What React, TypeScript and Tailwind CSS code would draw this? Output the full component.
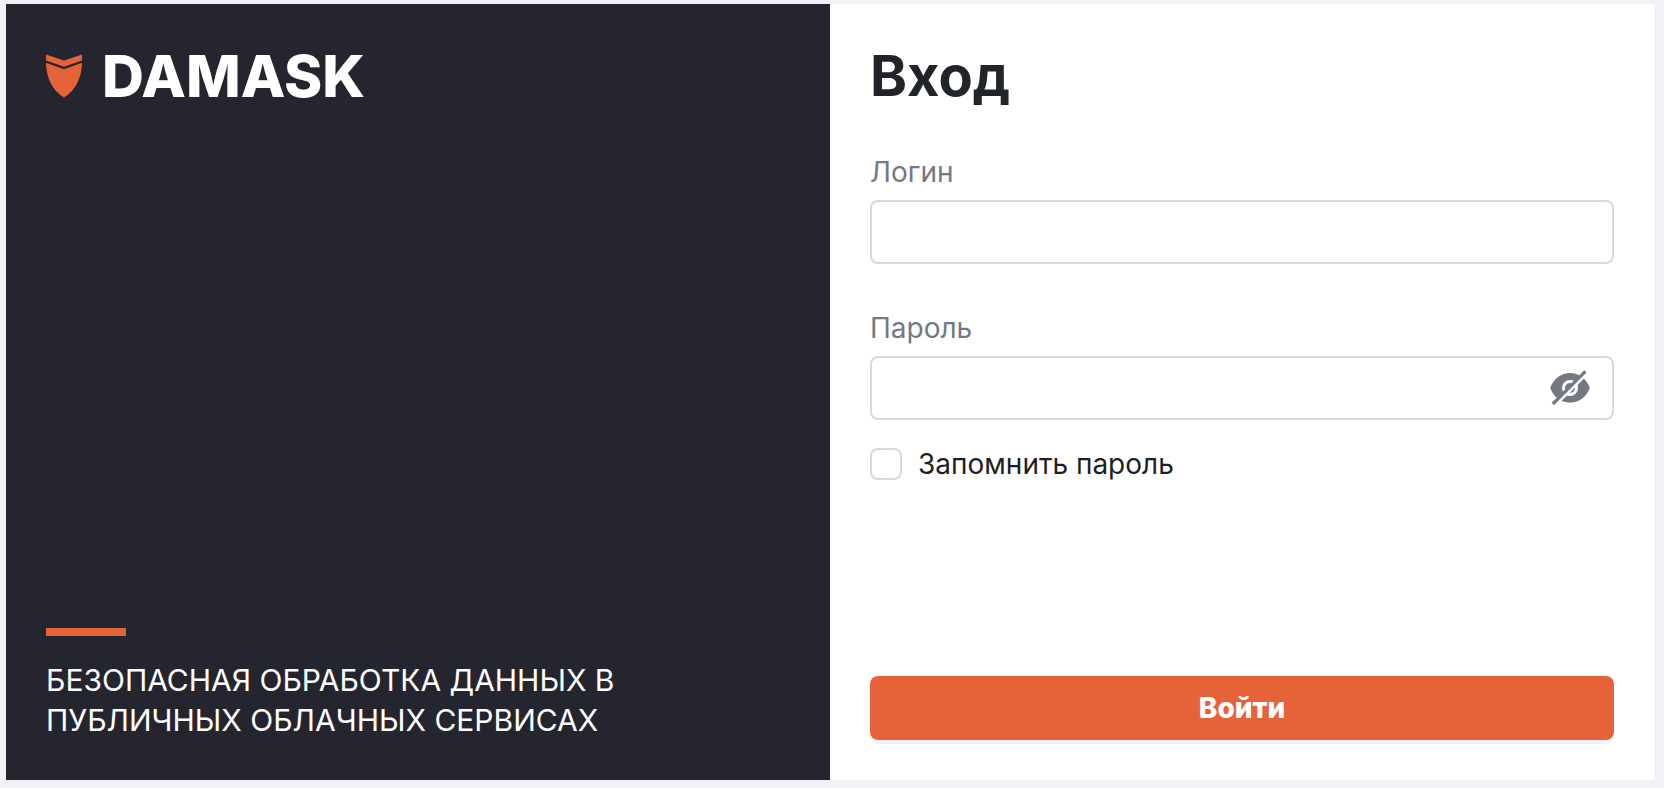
import React from 'react';

function ShieldLogo() {
  return (
    <svg viewBox="0 0 36 44" className="h-11 w-9 shrink-0" fill="#e66239" aria-hidden="true">
      <path d="M0 .4 18 6.400 36 .4V6.600L18 12.800 0 6.600Z" />
      <path d="M0 8.800 18 15.200 36 8.800C36 23 29.500 37 18 43.600 6.500 37 0 23 0 8.800Z" />
    </svg>
  );
}

function EyeOffIcon() {
  return (
    <svg viewBox="0 0 40 36" className="h-9 w-10" fill="none" aria-hidden="true">
      <path
        d="M.6 16.700C4.200 8.200 11.300 2.900 20 2.900S35.800 8.200 39.400 16.700Q39.900 17.900 39.400 19.100C35.800 27.500 28.700 32.700 20 32.700S4.200 27.500.6 19.100Q.1 17.900.6 16.700Z"
        fill="#747883"
      />
      <circle cx="20" cy="18" r="6.500" stroke="#fff" strokeWidth="3" />
      <path d="M4.600 35.800 38 2.400" stroke="#fff" strokeWidth="3" />
      <path d="M2.800 34 35.400 1.400" stroke="#747883" strokeWidth="3.200" />
    </svg>
  );
}

const labelClass = 'text-[28px] leading-10 text-[#747883]';

const fieldClass =
  'h-16 w-full rounded-lg border-2 border-[#d9d9d9] bg-white px-4 text-[28px] text-[#212529] outline-none focus:border-[#e66239]';

export default function App() {
  const [visible, setVisible] = React.useState(false);

  return (
    <div className="flex min-h-screen bg-[#f1f2f6] pt-1 pr-2.5 pb-2 pl-1.5 font-['Inter','Noto_Sans',sans-serif]">
      <main className="grid flex-1 grid-cols-2">
        <section className="flex flex-col justify-between bg-[#252530] p-10 text-white">
          <div className="flex h-16 items-center gap-5">
            <ShieldLogo />
            <span className="text-[58px] leading-[64px] font-extrabold">DAMASK</span>
          </div>
          <div>
            <div className="mb-6 h-2 w-20 bg-[#e66239]" />
            <p className="max-w-[600px] text-[30px] leading-10 uppercase">
              Безопасная обработка данных в публичных облачных сервисах
            </p>
          </div>
        </section>

        <form className="flex flex-col bg-white p-10" onSubmit={(e) => e.preventDefault()}>
          <h1 className="text-[56px] leading-[64px] font-bold text-[#212529]">Вход</h1>

          <div className="mt-11 flex flex-col gap-2">
            <label htmlFor="login" className={labelClass}>
              Логин
            </label>
            <input id="login" type="text" className={fieldClass} />
          </div>

          <div className="mt-11 flex flex-col gap-2">
            <label htmlFor="password" className={labelClass}>
              Пароль
            </label>
            <div className="relative">
              <input id="password" type={visible ? 'text' : 'password'} className={fieldClass} />
              <button
                type="button"
                aria-label="Показать пароль"
                onClick={() => setVisible(!visible)}
                className="absolute inset-y-0 right-6 flex items-center"
              >
                <EyeOffIcon />
              </button>
            </div>
          </div>

          <div className="mt-6 flex items-center gap-4">
            <input
              id="remember"
              type="checkbox"
              className="size-8 appearance-none rounded-lg border-2 border-[#d9d9d9] bg-white checked:bg-[#e66239]"
            />
            <label htmlFor="remember" className="text-[28px] leading-10 text-[#1f1f1f]">
              Запомнить пароль
            </label>
          </div>

          <button
            type="submit"
            className="mt-auto h-16 w-full rounded-lg bg-[#e66239] text-[28px] leading-10 font-extrabold text-white shadow-[0_4px_0_#ebf4fe]"
          >
            Войти
          </button>
        </form>
      </main>
    </div>
  );
}
